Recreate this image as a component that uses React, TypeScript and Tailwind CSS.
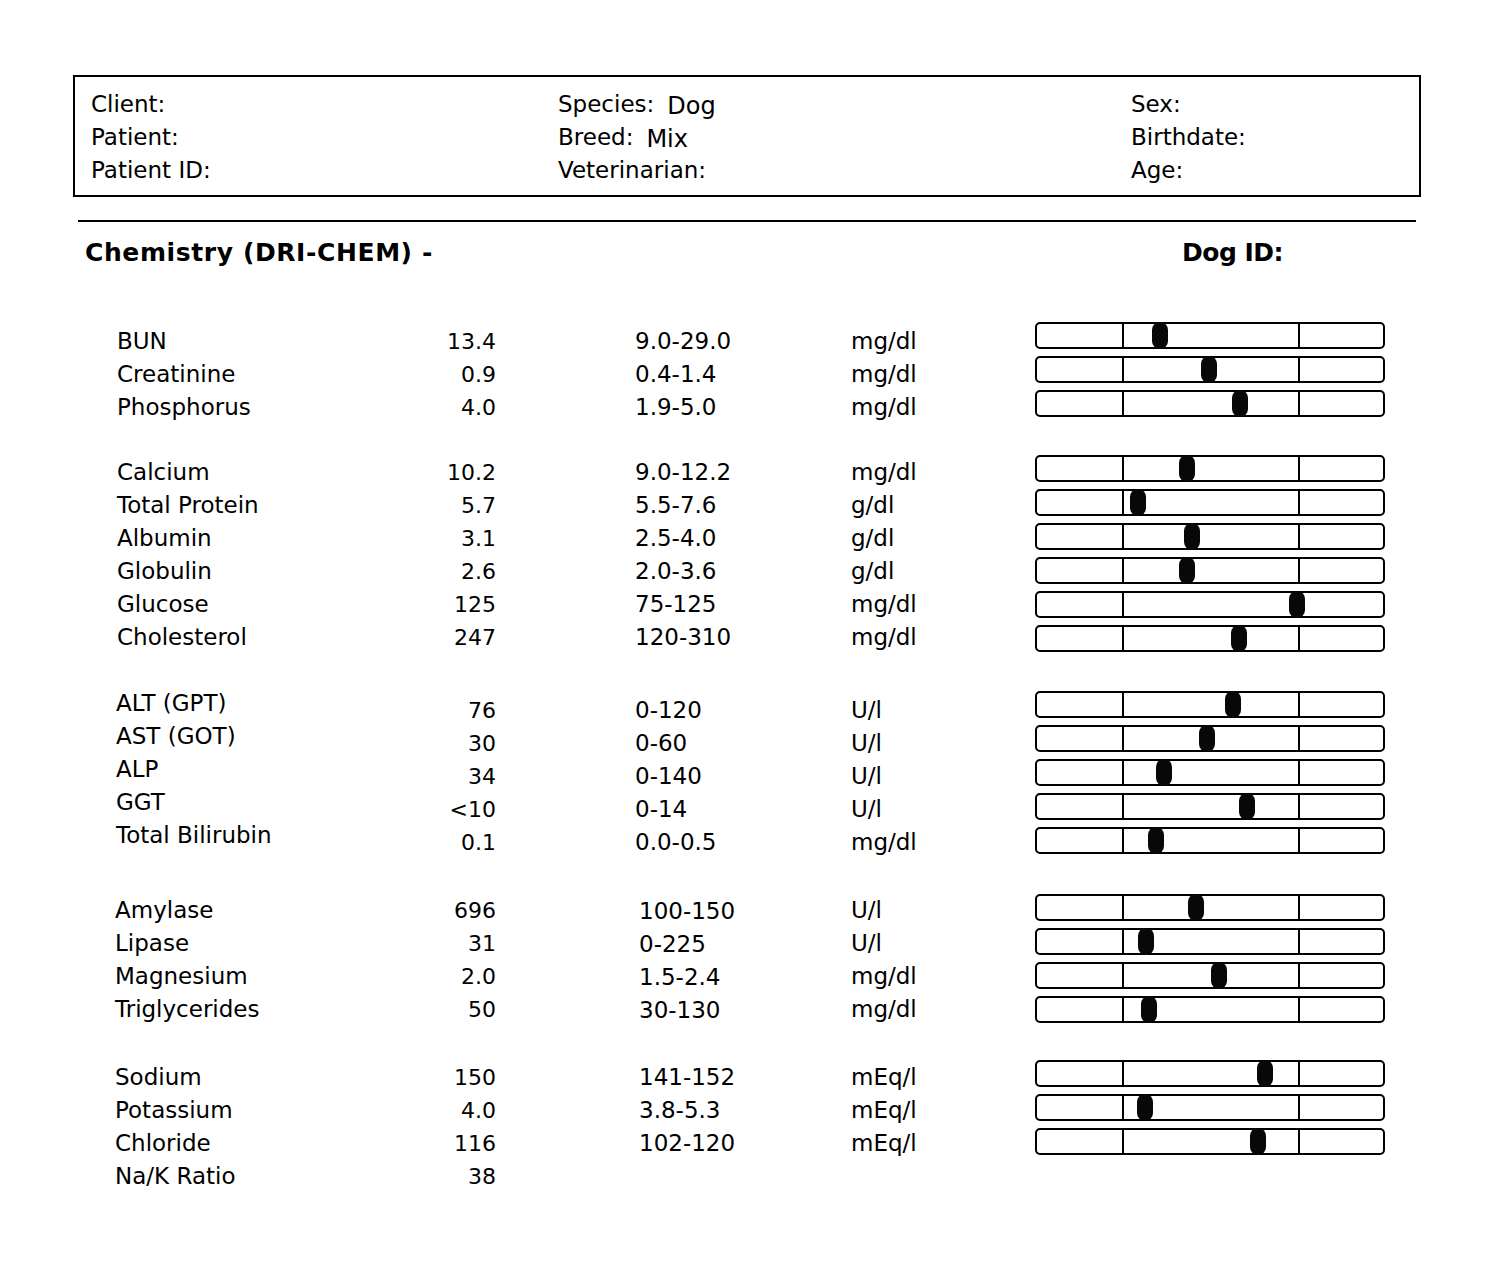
import React from "react";

type Row = { name: string; value: string; range?: string; unit?: string; marker?: number };
type Group = { mt: string; labelCls: string; rangeCls: string; barsCls: string; rows: Row[] };

const groups: Group[] = [
  {
    mt: "mt-[55px]",
    labelCls: "pl-[117px]",
    rangeCls: "ml-[139px] w-[216px]",
    barsCls: "-mt-[3px]",
    rows: [
      { name: "BUN", value: "13.4", range: "9.0-29.0", unit: "mg/dl", marker: 1160 },
      { name: "Creatinine", value: "0.9", range: "0.4-1.4", unit: "mg/dl", marker: 1209 },
      { name: "Phosphorus", value: "4.0", range: "1.9-5.0", unit: "mg/dl", marker: 1240 },
    ],
  },
  {
    mt: "mt-[32px]",
    labelCls: "pl-[117px]",
    rangeCls: "ml-[139px] w-[216px]",
    barsCls: "-mt-[1px]",
    rows: [
      { name: "Calcium", value: "10.2", range: "9.0-12.2", unit: "mg/dl", marker: 1187 },
      { name: "Total Protein", value: "5.7", range: "5.5-7.6", unit: "g/dl", marker: 1138 },
      { name: "Albumin", value: "3.1", range: "2.5-4.0", unit: "g/dl", marker: 1192 },
      { name: "Globulin", value: "2.6", range: "2.0-3.6", unit: "g/dl", marker: 1187 },
      { name: "Glucose", value: "125", range: "75-125", unit: "mg/dl", marker: 1297 },
      { name: "Cholesterol", value: "247", range: "120-310", unit: "mg/dl", marker: 1239 },
    ],
  },
  {
    mt: "mt-[40px]",
    labelCls: "pl-[116px] -translate-y-[7px]",
    rangeCls: "ml-[139px] w-[216px]",
    barsCls: "-mt-[3px]",
    rows: [
      { name: "ALT (GPT)", value: "76", range: "0-120", unit: "U/l", marker: 1233 },
      { name: "AST (GOT)", value: "30", range: "0-60", unit: "U/l", marker: 1207 },
      { name: "ALP", value: "34", range: "0-140", unit: "U/l", marker: 1164 },
      { name: "GGT", value: "<10", range: "0-14", unit: "U/l", marker: 1247 },
      { name: "Total Bilirubin", value: "0.1", range: "0.0-0.5", unit: "mg/dl", marker: 1156 },
    ],
  },
  {
    mt: "mt-[35px]",
    labelCls: "pl-[115px]",
    rangeCls: "ml-[143px] w-[212px] translate-y-[1px]",
    barsCls: "mt-0",
    rows: [
      { name: "Amylase", value: "696", range: "100-150", unit: "U/l", marker: 1196 },
      { name: "Lipase", value: "31", range: "0-225", unit: "U/l", marker: 1146 },
      { name: "Magnesium", value: "2.0", range: "1.5-2.4", unit: "mg/dl", marker: 1219 },
      { name: "Triglycerides", value: "50", range: "30-130", unit: "mg/dl", marker: 1149 },
    ],
  },
  {
    mt: "mt-[35px]",
    labelCls: "pl-[115px]",
    rangeCls: "ml-[143px] w-[212px]",
    barsCls: "-mt-[1px]",
    rows: [
      { name: "Sodium", value: "150", range: "141-152", unit: "mEq/l", marker: 1265 },
      { name: "Potassium", value: "4.0", range: "3.8-5.3", unit: "mEq/l", marker: 1145 },
      { name: "Chloride", value: "116", range: "102-120", unit: "mEq/l", marker: 1258 },
      { name: "Na/K Ratio", value: "38" },
    ],
  },
];

function Gauge({ marker }: { marker: number }) {
  return (
    <div className="relative w-[350px] h-[27px] border-2 border-black rounded-[5px] flex">
      <div className="w-[87px] h-full border-r-2 border-black" />
      <div className="w-[176px] h-full border-r-2 border-black" />
      <div className="flex-1" />
      <div
        className="absolute -top-[2px] w-[16px] h-[27px] rounded-full bg-[#080808]"
        style={{ left: marker - 8 - 1037 }}
      />
    </div>
  );
}

export default function App() {
  return (
    <div className="w-[1500px] h-[1274px] bg-white text-black font-['DejaVu_Sans',sans-serif] overflow-hidden">
      <div className="pt-[75px] pl-[73px]">
        <div className="w-[1348px] h-[122px] border-2 border-black pt-[11px] pl-[16px] flex text-[23px] leading-[33px]">
          <div className="w-[467px] flex flex-col">
            <span>Client:</span>
            <span>Patient:</span>
            <span>Patient ID:</span>
          </div>
          <div className="w-[573px] flex flex-col">
            <span>
              Species:<span className="ml-[13px] text-[24px] relative top-[2px]">Dog</span>
            </span>
            <span>
              Breed:<span className="ml-[13px] text-[24px] relative top-[2px]">Mix</span>
            </span>
            <span>Veterinarian:</span>
          </div>
          <div className="flex flex-col">
            <span>Sex:</span>
            <span>Birthdate:</span>
            <span>Age:</span>
          </div>
        </div>
      </div>
      <div className="mt-[23px] ml-[78px] w-[1338px] h-[2px] bg-black" />
      <div className="mt-[14px] h-[34px] flex items-center font-bold text-[25px]">
        <span className="pl-[85px] w-[1182px] tracking-[0.6px]">Chemistry (DRI-CHEM) -</span>
        <span className="tracking-[-0.5px]">Dog ID:</span>
      </div>
      {groups.map((g, gi) => (
        <div key={gi} className={`${g.mt} flex`}>
          <div className="w-[1035px] flex flex-col text-[23px]">
            {g.rows.map((r, ri) => (
              <div key={ri} className="h-[33px] flex items-center">
                <span className={`${g.labelCls} w-[417px]`}>{r.name}</span>
                <span className="w-[79px] text-right text-[22px]">{r.value}</span>
                <span className={g.rangeCls}>{r.range ?? ""}</span>
                <span className="w-[184px]">{r.unit ?? ""}</span>
              </div>
            ))}
          </div>
          <div className={`${g.barsCls} flex flex-col gap-[7px]`}>
            {g.rows
              .filter((r) => r.marker !== undefined)
              .map((r, ri) => (
                <Gauge key={ri} marker={r.marker as number} />
              ))}
          </div>
        </div>
      ))}
    </div>
  );
}
